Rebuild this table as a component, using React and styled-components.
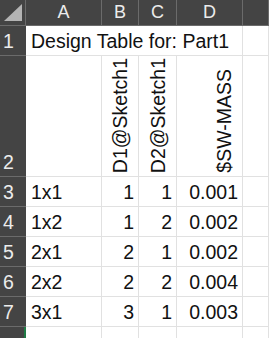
import React from 'react'
import styled, { createGlobalStyle } from 'styled-components'

const cols = ['A', 'B', 'C', 'D', '']

const rows = [
    ['1x1', 1, 1, '0.001'],
    ['1x2', 1, 2, '0.002'],
    ['2x1', 2, 1, '0.002'],
    ['2x2', 2, 2, '0.004'],
    ['3x1', 3, 1, '0.003'],
]

const params = ['D1@Sketch1', 'D2@Sketch1', '$SW-MASS']

function App() {
    return (
        <>
            <Global />
            <Sheet>
                <Corner>
                    <Triangle />
                </Corner>
                {cols.map((c, i) => (
                    <ColHead key={i}>{c}</ColHead>
                ))}

                <RowHead>1</RowHead>
                <Cell span={4}>Design Table for: Part1</Cell>
                <Cell />

                <RowHead>2</RowHead>
                <Cell />
                {params.map(p => (
                    <Cell key={p} rotated>
                        <Vertical>{p}</Vertical>
                    </Cell>
                ))}
                <Cell />

                {rows.map((r, i) => (
                    <React.Fragment key={i}>
                        <RowHead>{i + 3}</RowHead>
                        <Cell>{r[0]}</Cell>
                        <Cell right>{r[1]}</Cell>
                        <Cell right>{r[2]}</Cell>
                        <Cell right>{r[3]}</Cell>
                        <Cell />
                    </React.Fragment>
                ))}

                <RowHead active />
                <Cell />
                <Cell />
                <Cell />
                <Cell />
                <Cell />
            </Sheet>
        </>
    )
}

export default App

const Global = createGlobalStyle`
    html, body {
        margin: 0;
        padding: 0;
        background: #ffffff;
        overflow: hidden;
    }
    body {
        font-family: "Liberation Sans", Arial, sans-serif;
    }
`

const Sheet = styled.div`
    display: grid;
    grid-template-columns: 26px 76px 37px 38px 66px 1fr;
    grid-template-rows: 26px 30px 121px repeat(6, 30px);
    width: 269px;
    height: 338px;
    overflow: hidden;
    font-size: 19.5px;
    color: #111;
`

const Corner = styled.div`
    position: relative;
    background: #444444;
    border-right: 1px solid #6b6b6b;
    border-bottom: 1px solid #6b6b6b;
`

const Triangle = styled.div`
    position: absolute;
    right: 3px;
    bottom: 4px;
    width: 0;
    height: 0;
    border-left: 18px solid transparent;
    border-bottom: 17px solid #b4b4b4;
`

const ColHead = styled.div`
    background: #444444;
    color: #ececec;
    border-right: 1px solid #6b6b6b;
    border-bottom: 1px solid #6b6b6b;
    display: flex;
    align-items: flex-end;
    justify-content: center;
    padding-bottom: 2px;
    box-sizing: border-box;
    font-size: 18px;
    line-height: 22px;
`

const RowHead = styled.div`
    position: relative;
    background: #444444;
    color: #ececec;
    border-bottom: 1px solid #6b6b6b;
    display: flex;
    align-items: flex-end;
    padding: 0 0 3px 3px;
    box-sizing: border-box;
    line-height: 22px;
    box-shadow: inset -2px 0 0 ${props => props.active ? '#1e7b45' : 'transparent'};
`

const Cell = styled.div`
    grid-column: span ${props => props.span || 1};
    border-right: 1px solid #e1e1e1;
    border-bottom: 1px solid #e1e1e1;
    box-sizing: border-box;
    display: flex;
    align-items: flex-end;
    justify-content: ${props => props.right || props.rotated ? 'flex-end' : 'flex-start'};
    padding: ${props => props.rotated ? '0 7px 3px 0' : '0 4px 3px 5px'};
    line-height: 22px;
    white-space: nowrap;
    overflow: hidden;
`

const Vertical = styled.span`
    writing-mode: vertical-rl;
    transform: rotate(180deg);
    line-height: 22px;
`
